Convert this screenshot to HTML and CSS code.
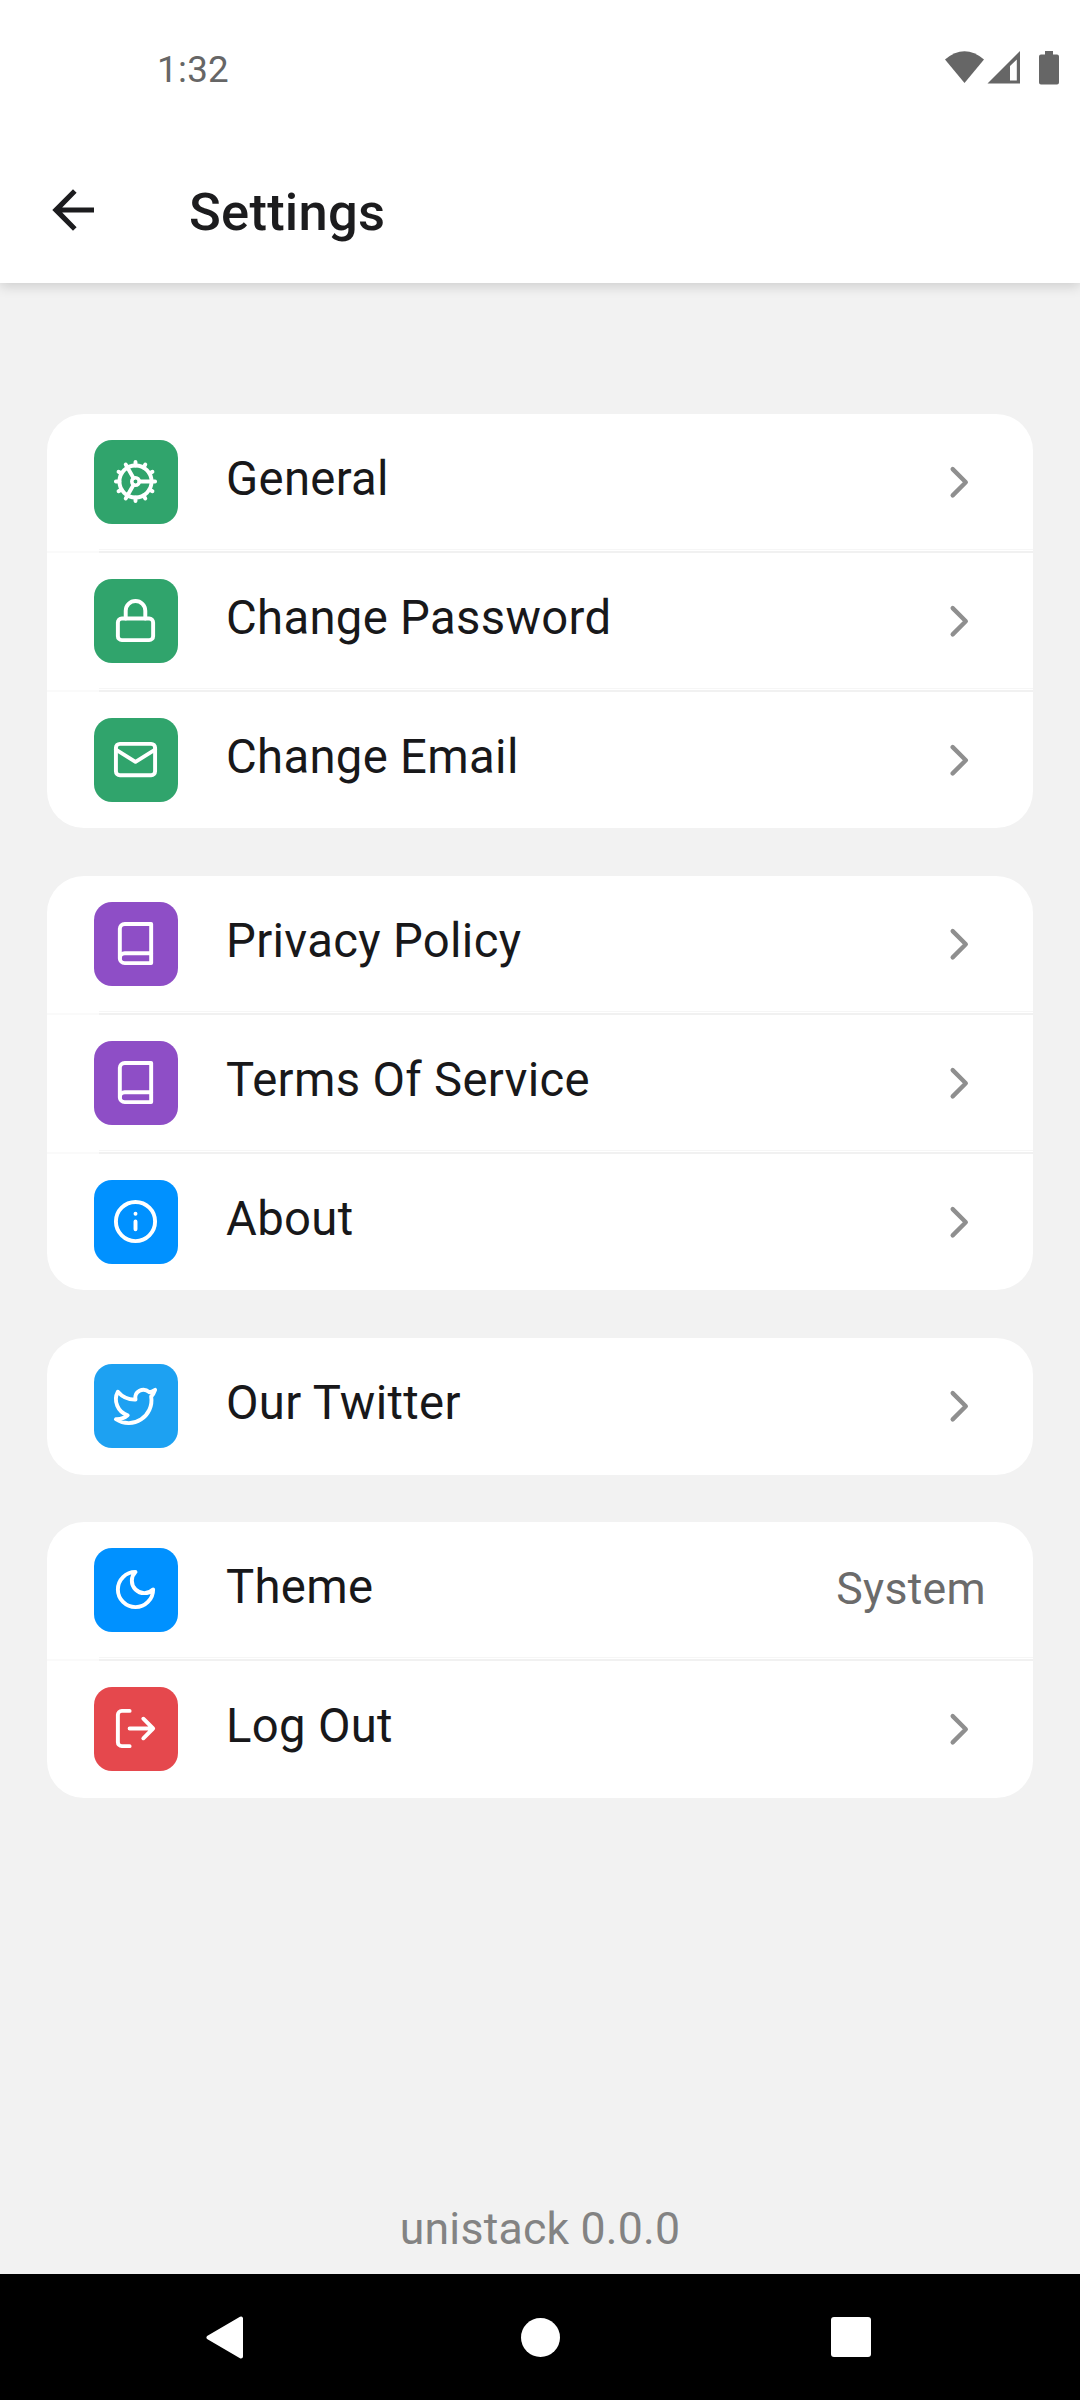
FILE: index.html
```
<!DOCTYPE html>
<html lang="en">
<head>
<meta charset="utf-8">
<title>Settings</title>
<link rel="stylesheet" href="styles.css">
</head>
<body>
<svg class="sprite" aria-hidden="true">
  <symbol id="chevron" viewBox="0 0 24 24"><path d="M9 18l6-6-6-6"/></symbol>
  <symbol id="book" viewBox="0 0 24 24"><path d="M4 19.500A2.500 2.500 0 0 1 6.500 17H20"/><path d="M6.500 2H20v20H6.500A2.500 2.500 0 0 1 4 19.500v-15A2.500 2.500 0 0 1 6.500 2z"/></symbol>
  <symbol id="gear" viewBox="0 0 24 24">
    <circle cx="12" cy="12" r="8.200"/><circle cx="12" cy="12" r="1.900" stroke-width="1.800"/>
    <path d="M14.100 12h6.100M10.950 10.180L7.900 4.900M10.950 13.820L7.900 19.100"/>
    <path d="M20.200 12H22M2 12h1.800M12 2v1.800M12 20.200V22M16.100 4.900L17 3.340M19.100 7.900L20.660 7M19.100 16.100l1.560.9M16.100 19.100l.9 1.560M7.900 19.100L7 20.660M4.900 16.100L3.340 17M4.900 7.900L3.340 7M7.900 4.900L7 3.340"/>
  </symbol>
</svg>
<div class="screen">
  <header class="top">
    <div class="status">
      <span class="clock">1:32</span>
      <svg class="signals" viewBox="0 0 120 40" width="120" height="40">
        <path d="M5 12.500Q24.500-4 44 12.500L24.500 36z"/>
        <path fill-rule="evenodd" d="M47.500 36.500L80 4v32.500zM70 33.500h6.800V12.500L70 19z"/>
        <path d="M105 4h8v3.500h4q2 0 2 2v26q0 2-2 2h-16q-2 0-2-2v-26q0-2 2-2h4z"/>
      </svg>
    </div>
    <div class="appbar">
      <svg class="back" viewBox="0 0 42 42" width="42" height="42"><path d="M42 18.400H10.200L24.600 3.800 21 .3.300 21 21 41.700l3.600-3.500L10.200 23.600H42z"/></svg>
      <h1>Settings</h1>
    </div>
  </header>
  <main class="content">
    <section class="card">
      <div class="row"><span class="tile green"><svg><use href="#gear"/></svg></span><span class="label">General</span><svg class="chev"><use href="#chevron"/></svg></div>
      <div class="row"><span class="tile green"><svg viewBox="0 0 24 24"><rect x="3" y="11" width="18" height="11" rx="2"/><path d="M7 11V7a5 5 0 0 1 10 0v4"/></svg></span><span class="label">Change Password</span><svg class="chev"><use href="#chevron"/></svg></div>
      <div class="row"><span class="tile green"><svg viewBox="0 0 24 24"><rect x="2" y="4" width="20" height="16" rx="2"/><path d="M22 7l-10 6.200L2 7"/></svg></span><span class="label">Change Email</span><svg class="chev"><use href="#chevron"/></svg></div>
    </section>
    <section class="card">
      <div class="row"><span class="tile purple"><svg><use href="#book"/></svg></span><span class="label">Privacy Policy</span><svg class="chev"><use href="#chevron"/></svg></div>
      <div class="row"><span class="tile purple"><svg><use href="#book"/></svg></span><span class="label">Terms Of Service</span><svg class="chev"><use href="#chevron"/></svg></div>
      <div class="row"><span class="tile blue"><svg viewBox="0 0 24 24"><circle cx="12" cy="12" r="10"/><path d="M12 16v-4M12 8h.01"/></svg></span><span class="label">About</span><svg class="chev"><use href="#chevron"/></svg></div>
    </section>
    <section class="card single">
      <div class="row"><span class="tile sky"><svg viewBox="0 0 24 24"><path d="M22 4s-.7 2.100-2 3.400c1.600 10-9.400 17.300-18 11.600 2.200.1 4.400-.6 6-2C3 15.500.5 9.600 3 5c2.200 2.600 5.600 4.100 9 4-.9-4.200 4-6.600 7-3.800 1.100 0 3-1.200 3-1.200z"/></svg></span><span class="label">Our Twitter</span><svg class="chev"><use href="#chevron"/></svg></div>
    </section>
    <section class="card">
      <div class="row"><span class="tile blue"><svg viewBox="0 0 24 24"><path d="M12 3a6.360 6.360 0 0 0 9 9 9 9 0 1 1-9-9z"/></svg></span><span class="label">Theme</span><span class="value">System</span></div>
      <div class="row"><span class="tile red"><svg viewBox="0 0 24 24"><path d="M9 21H5a2 2 0 0 1-2-2V5a2 2 0 0 1 2-2h4M16 17l5-5-5-5M21 12H9"/></svg></span><span class="label">Log Out</span><svg class="chev"><use href="#chevron"/></svg></div>
    </section>
    <p class="version">unistack 0.0.0</p>
  </main>
  <nav class="nav">
    <svg viewBox="0 0 38 43" width="38" height="43"><path d="M35 2.500v38L2.500 21.500z" stroke="#fff" stroke-width="4" stroke-linejoin="round"/></svg>
    <svg viewBox="0 0 39 39" width="39" height="39"><circle cx="19.500" cy="19.500" r="19.500"/></svg>
    <svg viewBox="0 0 40 40" width="40" height="40"><rect width="40" height="40" rx="3"/></svg>
  </nav>
</div>
</body>
</html>
```
FILE: styles.css
```
* { box-sizing: border-box; }
body { margin: 0; font-family: Roboto, sans-serif; color: #18181a; }
h1, p { margin: 0; font-weight: 400; }
svg { display: block; flex: none; }
.sprite { width: 0; height: 0; position: absolute; }
.screen { width: 1080px; height: 2400px; display: flex; flex-direction: column; background: #f2f2f2; }

.top { height: 283px; background: #fff; box-shadow: 0 3px 12px rgba(0, 0, 0, .16); }
.status { height: 136px; display: flex; justify-content: space-between; padding: 47px 20px 0 157px; }
.clock { font-size: 36.75px; line-height: 44px; letter-spacing: .3px; padding-top: 1px; color: #666; }
.signals { fill: #666; }
.appbar { height: 147px; display: flex; align-items: center; padding: 0 52px; gap: 95px; }
.back { fill: #1c1c1e; }
.appbar h1 { font-size: 52.5px; font-weight: 500; line-height: 62px; letter-spacing: .25px; color: #1c1c1e; padding-top: 4px; }

.content { flex: 1; padding: 131px 47px 0; display: flex; flex-direction: column; }
.card { background: #fff; border-radius: 37px; margin-bottom: 48px; }
.card.single { margin-bottom: 47px; }
.row { height: 139px; display: flex; padding: 26px 47px 0; background: linear-gradient(#fafafa, #fafafa) 0 137px / 52px 2px no-repeat, linear-gradient(#f6f6f6, #f6f6f6) 52px 135px / 100% 1px no-repeat, linear-gradient(#f1f1f1, #f1f1f1) 52px 137px / 100% 2px no-repeat; }
.row:last-child { height: 136px; background: none; }
.single .row:last-child { height: 137px; }
.card:nth-of-type(4) .row:last-child { height: 137px; }
.tile { width: 84px; height: 84px; border-radius: 18px; display: flex; align-items: center; justify-content: center; padding: 0 1px 1px 0; }
.tile svg { width: 47px; height: 47px; fill: none; stroke: #fff; stroke-width: 2; stroke-linecap: round; stroke-linejoin: round; }
.green { background: #30a46c; }
.purple { background: #8e4ec6; }
.blue { background: #0091ff; }
.sky { background: #1da1f2; }
.red { background: #e5484d; }
.label { flex: 1; margin-left: 48px; font-size: 47.25px; line-height: 56px; letter-spacing: .32px; padding-top: 11px; }
.chev { width: 52.5px; height: 52.5px; margin: 16px .5px 0 -.5px; fill: none; stroke: #8f8f8f; stroke-width: 2; stroke-linecap: round; stroke-linejoin: round; }
.value { font-size: 44.625px; line-height: 52px; letter-spacing: .3px; padding-top: 15px; color: #6b6b6b; }
.version { margin-top: auto; padding-bottom: 19px; text-align: center; font-size: 44.625px; line-height: 52px; letter-spacing: .2px; color: #838383; }

.nav { height: 126px; background: #000; display: grid; grid-template-columns: 314.5px 310.5px 40px; align-items: center; padding: 0 209px 0 206px; }
.nav svg { fill: #fff; }
```
